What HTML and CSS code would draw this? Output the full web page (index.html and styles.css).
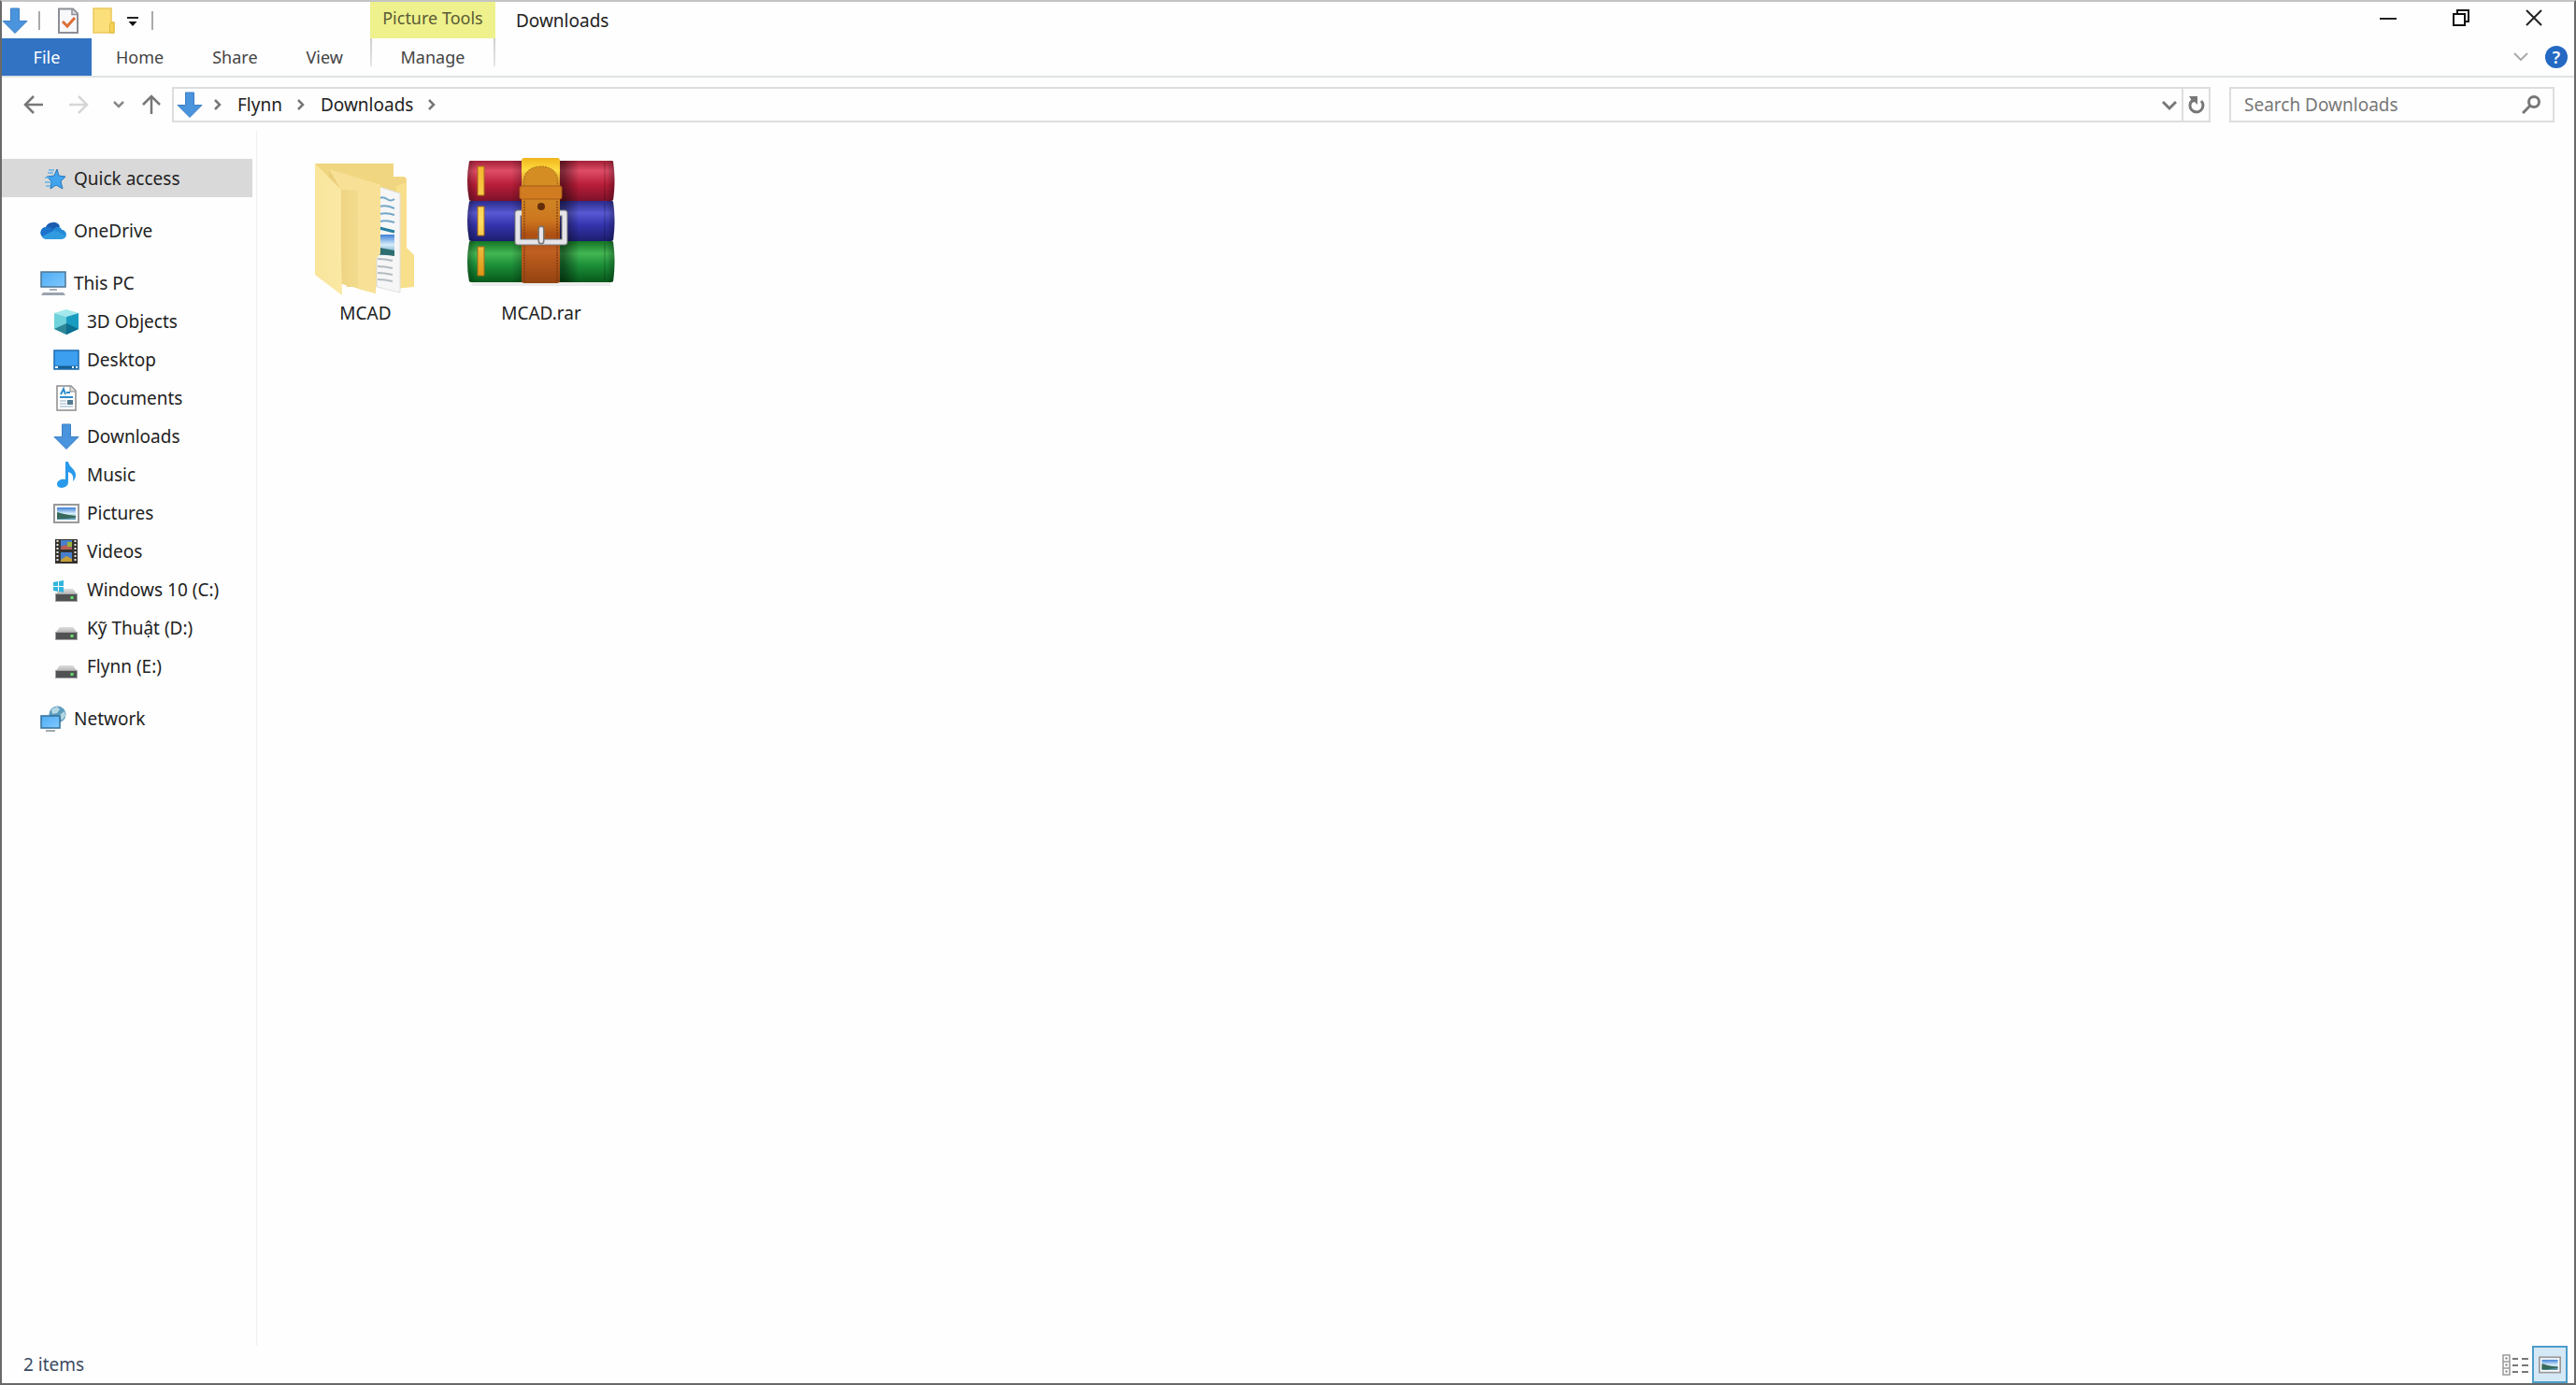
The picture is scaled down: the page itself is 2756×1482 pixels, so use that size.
FILE: index.html
```html
<!DOCTYPE html>
<html lang="en">
<head>
<meta charset="UTF-8" />
<meta name="viewport" content="width=device-width, initial-scale=1" />
<title>Downloads</title>
<link rel="stylesheet" href="styles.css">
</head>
<body>

<!-- Shared icons -->
<svg class="defs" aria-hidden="true">
  <defs>
    <linearGradient id="gScreen" x1="0" y1="0" x2="1" y2="1">
      <stop offset="0" stop-color="#4eacf2"/><stop offset="1" stop-color="#80c9ff"/>
    </linearGradient>
    <linearGradient id="gSky" x1="0" y1="0" x2="0" y2="1">
      <stop offset="0" stop-color="#3d80d6"/><stop offset=".5" stop-color="#d6ecfa"/><stop offset="1" stop-color="#4c91b0"/>
    </linearGradient>
    <linearGradient id="gDrive" x1="0" y1="0" x2="0" y2="1">
      <stop offset="0" stop-color="#dedede"/><stop offset="1" stop-color="#b4b4b4"/>
    </linearGradient>
  </defs>
  <symbol id="i-download" viewBox="0 0 28 28">
    <path d="M9.500 1h9v13.500H27L14 27.500 1 14.500h8.500z" fill="#4a94de" stroke="#3d7fc4"/>
  </symbol>
  <symbol id="i-drive" viewBox="0 0 28 28">
    <path d="M7 13h14l4.500 6h-23z" fill="url(#gDrive)"/>
    <rect x="2.500" y="18.500" width="23" height="8" fill="#505253" stroke="#a5a5a5"/>
    <rect x="18.500" y="21" width="3" height="3" fill="#62e06a"/>
  </symbol>
  <symbol id="i-picture" viewBox="0 0 28 28">
    <rect x="1" y="5" width="26" height="19" fill="#fff" stroke="#999" stroke-width="2"/>
    <rect x="4" y="8" width="20" height="13" fill="url(#gSky)"/>
    <path d="M4 13c5 1 9 3 20 4v2c-8 0-12 2-20 1z" fill="#38695a"/>
  </symbol>
  <symbol id="i-right" viewBox="0 0 12 14">
    <path d="M3 2l5 5-5 5" fill="none" stroke="#777" stroke-width="2.500"/>
  </symbol>
</svg>

<header class="ribbon">
  <div class="quick-bar">
    <svg class="icon" aria-hidden="true"><use href="#i-download"/></svg>
    <span class="sep"></span>
    <button class="tool" aria-label="Properties">
      <svg class="icon" viewBox="0 0 28 28">
        <path d="M4 1.500h15l5 5V27H4z" fill="#f8f8fa" stroke="#8c8f96" stroke-width="2"/>
        <path d="M18 2v5.500h6" fill="#ddd" stroke="#8c8f96" stroke-width="1.500"/>
        <path d="M8 15l5 5 8-9" fill="none" stroke="#dd6f37" stroke-width="3"/>
      </svg>
    </button>
    <button class="tool" aria-label="New folder">
      <svg class="icon" viewBox="0 0 28 28">
        <path d="M3 1h19v15h3v11H3z" fill="#fbdf7b" stroke="#ebc95c" stroke-width="1.500"/>
        <path d="M20.500 27V18l1.500-2h3v11z" fill="#f6d25b" stroke="#dfb93e"/>
      </svg>
    </button>
    <button class="tool small" aria-label="Customize Quick Access Toolbar">
      <svg viewBox="0 0 14 14"><path d="M1 4h12" stroke="#222" stroke-width="2"/><path d="M2.500 8h9L7 13z" fill="#111"/></svg>
    </button>
    <span class="sep"></span>
  </div>
  <div class="tools-head">Picture Tools</div>
  <div class="title-bar">
    <h1>Downloads</h1>
    <div class="win-buttons">
      <button aria-label="Minimize"><svg viewBox="0 0 18 18"><path d="M0 10h18" stroke="#222" stroke-width="2"/></svg></button>
      <button aria-label="Restore Down">
        <svg viewBox="0 0 18 18" fill="none" stroke="#111" stroke-width="2"><path d="M1 5h12v12H1zM5 5V1h12v12h-4"/></svg>
      </button>
      <button aria-label="Close"><svg viewBox="0 0 18 18"><path d="M1 1l16 16M17 1L1 17" stroke="#222" stroke-width="2"/></svg></button>
    </div>
  </div>

  <nav class="tabs" aria-label="Ribbon tabs">
    <button class="tab file">File</button>
    <button class="tab">Home</button>
    <button class="tab">Share</button>
    <button class="tab">View</button>
  </nav>
  <button class="tab manage">Manage</button>
  <div class="ribbon-end">
    <button class="expand" aria-label="Expand the Ribbon">
      <svg viewBox="0 0 16 10"><path d="M1 1l7 7 7-7" fill="none" stroke="#aaa" stroke-width="2"/></svg>
    </button>
    <button class="help" aria-label="Help">?</button>
  </div>
</header>

<div class="nav-row">
  <div class="nav-buttons">
    <button aria-label="Back">
      <svg viewBox="0 0 22 22"><path d="M21 11H2M11 2l-9 9 9 9" fill="none" stroke="#777" stroke-width="2.500"/></svg>
    </button>
    <button aria-label="Forward" disabled>
      <svg viewBox="0 0 22 22"><path d="M1 11h19M11 2l9 9-9 9" fill="none" stroke="#d6d6d6" stroke-width="2.500"/></svg>
    </button>
    <button class="recent" aria-label="Recent locations">
      <svg viewBox="0 0 12 12"><path d="M1 3l5 5 5-5" fill="none" stroke="#888" stroke-width="2.500"/></svg>
    </button>
    <button class="up" aria-label="Up">
      <svg viewBox="0 0 22 22"><path d="M11 21V2M2 11l9-9 9 9" fill="none" stroke="#777" stroke-width="2.500"/></svg>
    </button>
  </div>

  <div class="address">
    <svg class="icon" aria-hidden="true"><use href="#i-download"/></svg>
    <svg class="crumb-arrow" aria-hidden="true"><use href="#i-right"/></svg>
    <a href="#">Flynn</a>
    <svg class="crumb-arrow" aria-hidden="true"><use href="#i-right"/></svg>
    <a href="#">Downloads</a>
    <svg class="crumb-arrow" aria-hidden="true"><use href="#i-right"/></svg>
    <button class="history" aria-label="Previous locations">
      <svg viewBox="0 0 16 16"><path d="M1 5l7 7 7-7" fill="none" stroke="#777" stroke-width="3"/></svg>
    </button>
    <button class="refresh" aria-label="Refresh">
      <svg viewBox="0 0 18 20"><path d="M14 6a7 7 0 1 1-9.500-0.500" fill="none" stroke="#777" stroke-width="3"/><path d="M1 1h9v9L7 7 4 8 3 4z" fill="#777"/></svg>
    </button>
  </div>

  <form class="search">
    <input type="search" aria-label="Search Downloads" placeholder="Search Downloads">
    <button type="button" aria-label="Search">
      <svg viewBox="0 0 20 20"><circle cx="13" cy="7" r="5.500" fill="none" stroke="#777" stroke-width="3"/><path d="M9 11l-8 8" stroke="#777" stroke-width="3"/></svg>
    </button>
  </form>
</div>

<div class="content">
  <nav class="sidebar" aria-label="Navigation pane">
    <a href="#" class="item active">
      <svg class="icon" viewBox="0 0 28 28"><path d="M18 4l2 7 7 1-5 5 2 8-7-4-6 4 1-8-5-5 8-1z" fill="#42a4ed" stroke="#2678bd"/><path d="M9 5h6M8 8h6M5 13h5M5 18h7M6 22h5" stroke="#63b3ea" stroke-width="1.500"/></svg>
      Quick access
    </a>
    <a href="#" class="item">
      <svg class="icon" viewBox="0 0 28 28"><path d="M6 10a8 7 0 0 1 15-1l-4 7-12 2z" fill="#1c5cae"/><path d="M6 10c4-1 6 1 9 3l-12 8a6 6 0 0 1 3-11z" fill="#1b73cb"/><path d="M14 14c2-5 8-5 9-1a5 5 0 0 1 0 10H6c-2 0-4-2-4-3z" fill="#319be0"/><path d="M14 13c2-4 8-4 9 0 3 0 4 3 4 6z" fill="#2488d7"/></svg>
      OneDrive
    </a>
    <div class="group">
      <a href="#" class="item">
        <svg class="icon" viewBox="0 0 28 28"><rect x="1" y="2" width="26" height="16" fill="url(#gScreen)" stroke="#4b7594" stroke-width="1.500"/><path d="M10 21h8" stroke="#aab2bb" stroke-width="2"/><path d="M3 24h22l2 3H1z" fill="#9aa3ae"/></svg>
        This PC
      </a>
      <a href="#" class="item sub">
        <svg class="icon" viewBox="0 0 28 28"><path d="M1 5l13-4 13 4-13 4z" fill="#a3e8ed"/><path d="M1 5l13 4v19L1 22z" fill="#70d2db"/><path d="M27 5L14 9v19l13-6z" fill="#1a9cc0"/><path d="M1 22l13-6v12z" fill="#2e8798"/><path d="M27 22l-13-6v12z" fill="#0d6f91"/></svg>
        3D Objects
      </a>
      <a href="#" class="item sub">
        <svg class="icon" viewBox="0 0 28 28"><rect x="1" y="4" width="26" height="20" fill="#3d9ff0" stroke="#1b6bb1" stroke-width="1.500"/><path d="M2 22h24" stroke="#176095" stroke-width="3"/><path d="M2 22h3M20 22h2M24 22h2" stroke="#fff" stroke-width="2"/></svg>
        Desktop
      </a>
      <a href="#" class="item sub">
        <svg class="icon" viewBox="0 0 28 28"><path d="M4 1h15l5 5v21H4z" fill="#fff" stroke="#8c8c8c" stroke-width="1.500"/><path d="M18 1v6h6" fill="#ddd" stroke="#8c8c8c"/><path d="M8 10l3-6 2 6M14 8h4M7 13h14" fill="none" stroke="#2e8ccd" stroke-width="2"/><path d="M7 17h7M7 20h7M7 23h14" stroke="#8caec5"/><rect x="15" y="16" width="6" height="5" fill="#507a91"/></svg>
        Documents
      </a>
      <a href="#" class="item sub"><svg class="icon"><use href="#i-download"/></svg>Downloads</a>
      <a href="#" class="item sub">
        <svg class="icon" viewBox="0 0 28 28"><path d="M13 0h3c1 6 8 8 8 14 0 3-1 5-3 7 1-6-1-9-5-10v11c0 7-12 8-12 2 0-4 5-6 9-5z" fill="#299aeb"/></svg>
        Music
      </a>
      <a href="#" class="item sub"><svg class="icon"><use href="#i-picture"/></svg>Pictures</a>
      <a href="#" class="item sub">
        <svg class="icon" viewBox="0 0 28 28"><path d="M2 1h24v26H2z" fill="#35322d"/><path d="M4.500 2v24M23.500 2v24" stroke="#e8e8e8" stroke-width="2" stroke-dasharray="2 2"/><path d="M8 2h12v10H8zM8 15h12v10H8z" fill="#477fcf"/><path d="M8 9l5-2 7 3v2H8z" fill="#b75e55"/><path d="M15 4h5v5h-5z" fill="#9bb43c"/><path d="M8 23l6-4 6 3v3H8z" fill="#c69f39"/></svg>
        Videos
      </a>
      <a href="#" class="item sub">
        <svg class="icon" viewBox="0 0 28 28"><use href="#i-drive" width="28" height="28"/><path d="M0 6l5-1v5H0zM6 5l5-1v6H6zM0 11h5v5l-5-1zM6 11h5v6l-5-1z" fill="#33b5dd"/></svg>
        Windows 10 (C:)
      </a>
      <a href="#" class="item sub"><svg class="icon"><use href="#i-drive"/></svg>Kỹ Thuật (D:)</a>
      <a href="#" class="item sub"><svg class="icon"><use href="#i-drive"/></svg>Flynn (E:)</a>
    </div>
    <a href="#" class="item">
      <svg class="icon" viewBox="0 0 28 28"><circle cx="18.500" cy="9.500" r="9" fill="#5c9dbd"/><path d="M12 4l6-3 3 3-3 4-5 1zM21 10l5-4 1 5-4 5z" fill="#b6d8e3"/><rect x="1" y="11" width="20" height="13" fill="url(#gScreen)" stroke="#356f99" stroke-width="1.500"/><path d="M6 27h10" stroke="#a1a9ae" stroke-width="2"/></svg>
      Network
    </a>
  </nav>

  <main class="files">
    <a href="#" class="tile">
      <svg viewBox="0 0 160 160" aria-hidden="true">
        <defs>
          <linearGradient id="gFold" x1="0" y1="0" x2="1" y2="0"><stop offset="0" stop-color="#f9e59b"/><stop offset="1" stop-color="#fae8a4"/></linearGradient>
          <linearGradient id="gFold2" x1="0" y1="0" x2="1" y2="0"><stop offset="0" stop-color="#e9cd78"/><stop offset=".35" stop-color="#f0d788"/><stop offset="1" stop-color="#f8e39a"/></linearGradient>
        </defs>
        <path d="M26 14h84v14h10q4 0 4 4v73l8 7v34H60z" fill="#f1d681"/>
        <path d="M113 38l11-4v70l8 8v34l-20 2z" fill="#f7df8c"/>
        <path d="M92 38l25 8v106l-25-6z" fill="#f6f6f6" stroke="#dfdfdf"/>
        <path d="M95 51q4-2 8 1t8 0M95 60q8-2 16 2M95 68q8-2 16 1M95 76q8-2 16 1" fill="none" stroke="#72a7c9" stroke-width="2"/>
        <path d="M95 83l16 4" stroke="#267fa0" stroke-width="3"/>
        <rect x="95" y="90" width="16" height="22" fill="url(#gSky)"/>
        <path d="M95 104l16 3v6l-16-2z" fill="#2e6d70"/>
        <path d="M93 116q8 0 16 2M93 124q8 0 16 2M93 131q8 0 16 2M93 138q8 0 16 2" fill="none" stroke="#b4bcc0" stroke-width="2"/>
        <path d="M41 20l55 17v73l-5 6v37l-50-14z" fill="url(#gFold2)"/>
        <path d="M72 36l24 1v73l-5 6v37l-19-5z" fill="#f8e196"/>
        <path d="M41 20l55 17-24 6-18-1z" fill="#f8e196"/>
        <path d="M26 14l28 28v68l1 45-29-22z" fill="url(#gFold)"/>
      </svg>
      <span>MCAD</span>
    </a>
    <a href="#" class="tile">
      <svg viewBox="0 0 160 160" aria-hidden="true">
        <defs>
          <linearGradient id="gRed" x1="0" y1="0" x2="0" y2="1"><stop offset="0" stop-color="#a32137"/><stop offset=".25" stop-color="#df4c66"/><stop offset=".6" stop-color="#b81d38"/><stop offset="1" stop-color="#7e1229"/></linearGradient>
          <linearGradient id="gBlue" x1="0" y1="0" x2="0" y2="1"><stop offset="0" stop-color="#2b2b8c"/><stop offset=".3" stop-color="#5959d4"/><stop offset=".6" stop-color="#3434ad"/><stop offset="1" stop-color="#1d1d70"/></linearGradient>
          <linearGradient id="gGreen" x1="0" y1="0" x2="0" y2="1"><stop offset="0" stop-color="#147426"/><stop offset=".3" stop-color="#42b652"/><stop offset=".6" stop-color="#1b8d38"/><stop offset="1" stop-color="#07591a"/></linearGradient>
          <linearGradient id="gShade" x1="0" y1="0" x2="1" y2="0"><stop offset="0" stop-color="#000" stop-opacity=".3"/><stop offset=".06" stop-color="#000" stop-opacity="0"/><stop offset=".3" stop-color="#000" stop-opacity="0"/><stop offset=".38" stop-color="#000" stop-opacity=".25"/><stop offset=".65" stop-color="#000" stop-opacity=".45"/><stop offset=".76" stop-color="#000" stop-opacity="0"/><stop offset=".94" stop-color="#000" stop-opacity="0"/><stop offset="1" stop-color="#000" stop-opacity=".3"/></linearGradient>
          <linearGradient id="gBelt" x1="0" y1="0" x2="0" y2="1"><stop offset="0" stop-color="#f0b51c"/><stop offset=".1" stop-color="#ffdd42"/><stop offset=".2" stop-color="#d39028"/><stop offset=".5" stop-color="#cc761f"/><stop offset=".62" stop-color="#ac4e12"/><stop offset=".75" stop-color="#bf5f20"/><stop offset="1" stop-color="#944310"/></linearGradient>
          <linearGradient id="gGold" x1="0" y1="0" x2="0" y2="1"><stop offset="0" stop-color="#f5b62e"/><stop offset=".5" stop-color="#ffdd62"/><stop offset="1" stop-color="#dd9615"/></linearGradient>
        </defs>
        <path d="M6 143h148" stroke="#ececec" stroke-width="4"/>
        <path d="M3 12q0-1 2-1h150q2 0 2 1 3 21 0 41l-2 1H5l-2-1q-4-21 0-41z" fill="url(#gRed)"/>
        <path d="M3 55q0-1 2-1h150q2 0 2 1 3 21 0 41l-2 1H5l-2-1q-4-21 0-41z" fill="url(#gBlue)"/>
        <path d="M3 98q0-1 2-1h150q2 0 2 1 3 21 0 42l-2 1H5l-2-1q-4-21 0-42z" fill="url(#gGreen)"/>
        <path d="M3 11h154q3 21 0 43 3 21 0 43 3 21 0 44H3q-4-22 0-44-4-22 0-43-4-22 0-43z" fill="url(#gShade)"/>
        <path d="M148 13v40M148 56v40M148 99v40" stroke="#000" stroke-opacity=".15" stroke-width="2"/>
        <path d="M12 17h7v31h-7zM12 60h7v31h-7zM12 103h7v31h-7z" fill="url(#gGold)" stroke="#a66b16"/>
        <rect x="59" y="8" width="41" height="134" rx="3" fill="url(#gBelt)"/>
        <path d="M62 38q-3-20 18-21 20 1 17 21" fill="#d48d23" stroke="#a26b1b" stroke-dasharray="2 1"/>
        <path d="M62 54v86M97 54v86" stroke="#6e3413" stroke-dasharray="2 1"/>
        <rect x="57" y="38" width="45" height="14" rx="2" fill="#d17c20" stroke="#a65b18"/>
        <path d="M59 67h-4v31h50V67h-5" fill="none" stroke="#777" stroke-width="7" stroke-linejoin="round"/>
        <path d="M59 67h-4v31h50V67h-5" fill="none" stroke="#e4e4e9" stroke-width="5" stroke-linejoin="round"/>
        <ellipse cx="80" cy="60" rx="4" ry="4" fill="#632d0c"/>
        <path d="M80 84v13" stroke="#777" stroke-width="7" stroke-linecap="round"/>
        <path d="M80 84v13" stroke="#e4e4e9" stroke-width="4" stroke-linecap="round"/>
      </svg>
      <span>MCAD.rar</span>
    </a>
  </main>
</div>

<footer class="status">
  <span>2 items</span>
  <div class="views">
    <button aria-label="Details view">
      <svg class="icon" viewBox="0 0 28 28"><path d="M1 4h7v21H1zM1 11h7M1 18h7" fill="none" stroke="#999" stroke-width="1.500"/><path d="M3.500 7.500h2M3.500 14.500h2M3.500 21.500h2M11 8h6M21 8h7M11 15h6M21 15h7M11 22h6M21 22h7" stroke="#777" stroke-width="2"/></svg>
    </button>
    <button class="on" aria-label="Large icons view"><svg class="icon"><use href="#i-picture"/></svg></button>
  </div>
</footer>

</body>
</html>
```
FILE: styles.css
```css
* {
  margin: 0;
  padding: 0;
  box-sizing: border-box;
}

body {
  font-family: "Noto Sans", "Open Sans", sans-serif;
  font-size: 19px;
  line-height: 28px;
  color: #222;
  background: #fefefe;
  min-height: 100vh;
  display: flex;
  flex-direction: column;
  border: 2px solid #6a6a6a;
  border-top-color: #c4c4c4;
}

button {
  font: inherit;
  color: inherit;
  background: none;
  border: none;
  display: flex;
  align-items: center;
  justify-content: center;
}

a {
  color: inherit;
  text-decoration: none;
}

svg {
  display: block;
  flex-shrink: 0;
}

.defs {
  position: absolute;
  width: 0;
  height: 0;
}

.icon {
  width: 28px;
  height: 28px;
}

/* Ribbon */
.ribbon {
  display: grid;
  grid-template-columns: auto 134px 1fr;
  grid-template-rows: 39px 40px;
  border-bottom: 2px solid #e0e2e4;
}

.quick-bar {
  display: flex;
  align-items: center;
}

.sep {
  width: 2px;
  height: 20px;
  margin: 0 11px;
  background: #aaa;
}

.tool {
  width: 38px;
  height: 36px;
}

.tool.small {
  width: 24px;
}

.tool.small + .sep {
  margin-left: 8px;
}

.tool.small svg {
  width: 14px;
  height: 14px;
}

.tools-head {
  background: #eef18c;
  color: #5a5b35;
  font-size: 18px;
  line-height: 34px;
  text-align: center;
}

.title-bar {
  display: flex;
  justify-content: space-between;
  padding-left: 22px;
}

.title-bar h1 {
  font-size: 19px;
  font-weight: 400;
  line-height: 40px;
}

.win-buttons {
  display: flex;
  padding-right: 4px;
}

.win-buttons button {
  width: 78px;
  height: 34px;
}

.win-buttons svg {
  width: 18px;
  height: 18px;
}

.tabs {
  display: flex;
  padding-right: 3px;
}

.tab {
  font-size: 18px;
  color: #444;
  padding: 0 26px;
}

.tab.file {
  width: 96px;
  background: #3273c4;
  color: #fff;
}

.tab.manage {
  border: solid;
  border-width: 0 2px;
  border-image: linear-gradient(#ccc, #e4e4e4 70%, transparent 75%) 2;
}

.ribbon-end {
  display: flex;
  align-items: center;
  justify-content: flex-end;
  gap: 18px;
  padding-right: 7px;
}

.expand svg {
  width: 16px;
  height: 10px;
}

.help {
  width: 24px;
  height: 24px;
  border-radius: 50%;
  background: #2469c3;
  color: #fff;
  font-size: 18px;
  font-weight: 600;
}

/* Address bar */
.nav-row {
  display: flex;
  align-items: center;
  padding: 10px 21px 9px 23px;
}

.nav-buttons {
  display: flex;
  align-items: center;
  padding-right: 11px;
}

.nav-buttons svg {
  width: 22px;
  height: 22px;
}

.nav-buttons button {
  margin-right: 26px;
}

.nav-buttons .up {
  margin-right: 0;
}

.nav-buttons .recent {
  width: 12px;
  margin-right: 18px;
}

.nav-buttons .recent svg {
  width: 12px;
  height: 12px;
}

.address {
  flex: 1;
  display: flex;
  align-items: center;
  height: 38px;
  border: 2px solid #dcdddf;
  padding-left: 3px;
}

.crumb-arrow {
  width: 12px;
  height: 14px;
  margin: 0 15px 0 14px;
}

.address .icon + .crumb-arrow {
  margin-left: 10px;
}

.history {
  margin-left: auto;
  padding: 0 5px;
}

.history svg {
  width: 16px;
  height: 16px;
}

.refresh {
  width: 29px;
  height: 34px;
  border-left: 2px solid #dcdddf;
}

.refresh svg {
  width: 18px;
  height: 20px;
}

.search {
  display: flex;
  width: 348px;
  height: 38px;
  margin-left: 20px;
  border: 2px solid #dcdddf;
}

.search input {
  flex: 1;
  min-width: 0;
  padding-left: 14px;
  border: none;
  outline: none;
  background: none;
  font: inherit;
}

.search input::placeholder {
  color: #777;
  opacity: 1;
}

.search button {
  width: 46px;
}

.search svg {
  width: 20px;
  height: 20px;
}

/* Navigation pane + files */
.content {
  flex: 1;
  display: flex;
}

.sidebar {
  width: 273px;
  padding: 30px 4px 0 0;
  border-right: 1px solid #f0f0f0;
  display: flex;
  flex-direction: column;
  gap: 15px;
}

.item {
  display: flex;
  align-items: center;
  gap: 8px;
  height: 41px;
  padding-left: 41px;
  white-space: nowrap;
}

.item.sub {
  padding-left: 55px;
}

.item.active {
  background: #d9d9d9;
}

.files {
  flex: 1;
  display: flex;
  align-items: flex-start;
  padding: 21px 22px;
}

.tile {
  width: 188px;
  display: flex;
  flex-direction: column;
  align-items: center;
  text-align: center;
}

.tile svg {
  width: 160px;
  height: 160px;
}

/* Status bar */
.status {
  display: flex;
  align-items: center;
  justify-content: space-between;
  height: 40px;
  padding: 0 7px 0 23px;
  color: #3c4a63;
}

.views {
  display: flex;
  gap: 4px;
}

.views .on {
  width: 38px;
  height: 40px;
  border: 2px solid #4c9dc9;
  background: #d5e8f5;
}

.views .on .icon {
  width: 24px;
}
```
